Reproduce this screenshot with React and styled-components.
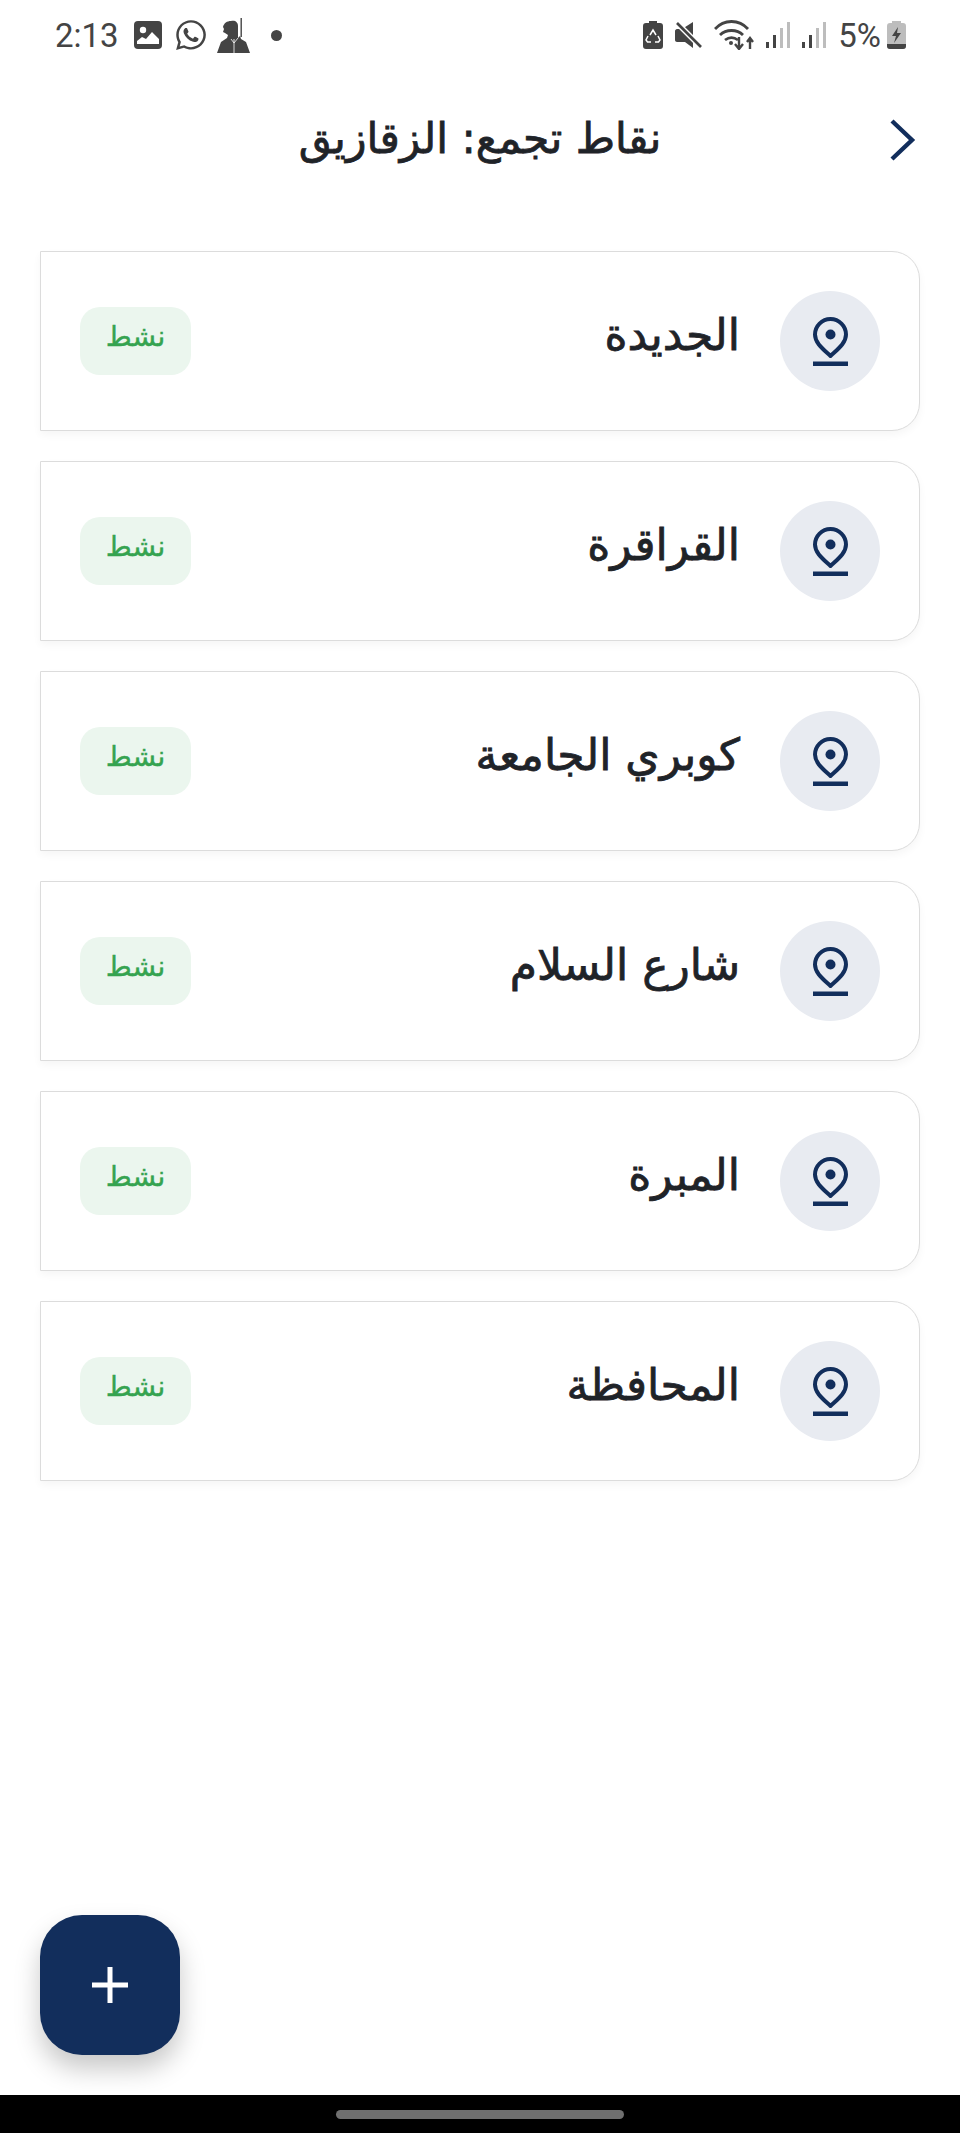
import styled, { createGlobalStyle } from 'styled-components'
import { FaWhatsapp } from 'react-icons/fa'

const GlobalStyle = createGlobalStyle`
  html, body {
    margin: 0;
    padding: 0;
    background: #fff;
  }
  * {
    box-sizing: border-box;
  }
`

const Screen = styled.div`
  position: relative;
  display: flex;
  flex-direction: column;
  width: 960px;
  height: 2133px;
  overflow: hidden;
  background: #fff;
  font-family: "DejaVu Sans", "Noto Sans", sans-serif;
`

const StatusBar = styled.div`
  display: flex;
  align-items: center;
  justify-content: space-between;
  height: 70px;
  padding: 0 54px 0 55px;
  color: #444;
`

const StatusGroup = styled.div`
  display: flex;
  align-items: center;
  gap: ${(p) => p.$gap}px;
`

const Clock = styled.span`
  font-family: Roboto, sans-serif;
  font-size: 33px;
  line-height: 1;
  margin-right: 3px;
`

const Percent = styled.span`
  font-family: Roboto, sans-serif;
  font-size: 33px;
  line-height: 1;
  margin: 0 -6px 0 0;
`

const Dot = styled.span`
  width: 11px;
  height: 11px;
  margin-left: 9px;
  border-radius: 50%;
  background: #444;
`

const Header = styled.header`
  display: flex;
  align-items: center;
  justify-content: center;
  position: relative;
  height: 140px;
  padding-bottom: 4px;
`

const Title = styled.h1`
  margin: 0;
  direction: rtl;
  font-size: 42.5px;
  font-weight: 400;
  color: #1f2328;
  -webkit-text-stroke: 0.8px #1f2328;
`

const BackButton = styled.span`
  position: absolute;
  top: 48px;
  right: 44px;
  display: flex;
  color: #122e5c;
`

const List = styled.div`
  display: flex;
  flex-direction: column;
  gap: 30px;
  padding: 41px 40px 0;
`

const Card = styled.div`
  display: flex;
  align-items: center;
  justify-content: space-between;
  direction: rtl;
  height: 180px;
  padding: 0 39px;
  background: #fff;
  border: 1.5px solid #dcdcdc;
  border-radius: 0 28px 28px 0;
  box-shadow: 0 4px 8px rgba(0, 0, 0, 0.04);
`

const CardMain = styled.div`
  display: flex;
  align-items: center;
  gap: 40px;
`

const PinCircle = styled.div`
  display: flex;
  align-items: center;
  justify-content: center;
  width: 100px;
  height: 100px;
  border-radius: 50%;
  background: #e8ebf1;
  color: #122e5c;
`

const PointName = styled.span`
  padding-bottom: 14px;
  font-size: 44px;
  color: #1f2328;
  -webkit-text-stroke: 0.8px #1f2328;
`

const Badge = styled.span`
  display: flex;
  align-items: center;
  justify-content: center;
  width: 111px;
  height: 68px;
  padding-bottom: 10px;
  border-radius: 20px;
  background: #ebf6ee;
  color: #35a350;
  font-size: 28px;
  -webkit-text-stroke: 0.4px #35a350;
`

const Fab = styled.button`
  position: absolute;
  left: 40px;
  bottom: 78px;
  display: flex;
  align-items: center;
  justify-content: center;
  width: 140px;
  height: 140px;
  padding: 0;
  border: 0;
  border-radius: 42px;
  background: #122e5c;
  color: #fff;
  box-shadow: 0 14px 26px rgba(0, 0, 0, 0.22);
`

const NavBar = styled.div`
  position: absolute;
  left: 0;
  right: 0;
  bottom: 0;
  display: flex;
  align-items: center;
  justify-content: center;
  height: 38px;
  background: #000;
`

const NavPill = styled.span`
  width: 288px;
  height: 9px;
  border-radius: 5px;
  background: #6f6f6f;
`

const Glyph = styled.svg`
  display: block;
  flex: none;
  margin-left: ${(p) => p.$shift || 0}px;
`

function GalleryIcon() {
  return (
    <Glyph width="28" height="28" viewBox="0 0 28 28">
      <rect width="28" height="28" rx="4" fill="#444" />
      <circle cx="9" cy="9" r="3.2" fill="#fff" />
      <path d="M3 23v-3l5-4 4 2 6-7 7 7v5z" fill="#fff" />
    </Glyph>
  )
}

function SoldierIcon() {
  return (
    <Glyph $shift={-3} width="33" height="35" viewBox="0 0 33 35">
      <path d="M23.5 0h1.4v19h-1.4z" fill="#444" />
      <path
        d="M14 3c4-1 7 1 7 5v12l2-2 1 3 5 3 4 11H0l4-11 6-4 1-3-3-2-2-1 1-3-1-2c1-4 4-6 8-6z"
        fill="#444"
      />
      <path d="M17 21l0 14M21 20l-4 5-3-4" stroke="#fff" strokeWidth="0.8" fill="none" />
    </Glyph>
  )
}

function RecycleBatteryIcon() {
  return (
    <Glyph width="20" height="28" viewBox="0 0 20 28">
      <path d="M6 0h8v2h3a3 3 0 0 1 3 3v20a3 3 0 0 1-3 3H3a3 3 0 0 1-3-3V5a3 3 0 0 1 3-3h3z" fill="#444" />
      <path
        d="M7 14l3-5 3 5M15 15l2 4-1.5 2H12M8 21H4.5L3 19l2-4"
        stroke="#fff"
        strokeWidth="1.5"
        fill="none"
      />
    </Glyph>
  )
}

function MuteIcon() {
  return (
    <Glyph width="27" height="26" viewBox="0 0 27 26">
      <path d="M0 9c0-1 1-2 2-2h5l11-7v26l-8-6H2c-1 0-2-1-2-2z" fill="#444" />
      <path d="M2 1l24 24" stroke="#fff" strokeWidth="5.5" />
      <path d="M2 1l24 24" stroke="#444" strokeWidth="2.6" />
    </Glyph>
  )
}

function WifiIcon() {
  return (
    <Glyph width="40" height="30" viewBox="0 0 40 30">
      <path
        d="M1 9c9-10 24-10 33 0M6 15c6-6 17-6 23 0M11 20c4-3 9-3 13 0"
        stroke="#444"
        strokeWidth="2.8"
        fill="none"
      />
      <circle cx="17" cy="23" r="2" fill="#444" />
      <path d="M25 17v11M21 24l4 5 4-5" stroke="#444" strokeWidth="2.4" fill="none" />
      <path d="M36 29V18M33 22l3-4 3 4" stroke="#444" strokeWidth="2.4" fill="none" />
    </Glyph>
  )
}

function SignalIcon() {
  return (
    <Glyph width="24" height="26" viewBox="0 0 24 26">
      <rect x="0" y="20" width="3" height="6" fill="#444" />
      <rect x="7" y="13" width="3" height="13" fill="#444" />
      <rect x="14" y="6" width="3" height="20" fill="#bdbdbd" />
      <rect x="21" y="0" width="3" height="26" fill="#bdbdbd" />
    </Glyph>
  )
}

function ChargingBatteryIcon() {
  return (
    <Glyph width="19" height="28" viewBox="0 0 19 28">
      <path d="M5 0h9v2h2a3 3 0 0 1 3 3v20a3 3 0 0 1-3 3H3a3 3 0 0 1-3-3V5a3 3 0 0 1 3-3h2z" fill="#bdbdbd" />
      <path d="M0 23h19v2a3 3 0 0 1-3 3H3a3 3 0 0 1-3-3z" fill="#444" />
      <path d="M11 6l-6 9h4l-2 7 7-10h-4z" fill="#444" />
    </Glyph>
  )
}

function PinIcon() {
  return (
    <svg width="35" height="49" viewBox="0 0 35 49">
      <path
        d="M17.5 39C10 32 2 26 2 17.5a15.5 15.5 0 0 1 31 0C33 26 25 32 17.5 39z"
        fill="none"
        stroke="currentColor"
        strokeWidth="4"
        strokeLinejoin="round"
      />
      <circle cx="17.5" cy="17.5" r="5" fill="currentColor" />
      <rect x="0" y="44.5" width="35" height="4.5" fill="currentColor" />
    </svg>
  )
}

const points = ['الجديدة', 'القراقرة', 'كوبري الجامعة', 'شارع السلام', 'المبرة', 'المحافظة']

export default function App() {
  return (
    <Screen>
      <GlobalStyle />
      <StatusBar>
        <StatusGroup $gap={12}>
          <Clock>2:13</Clock>
          <GalleryIcon />
          <FaWhatsapp size={34} />
          <SoldierIcon />
          <Dot />
        </StatusGroup>
        <StatusGroup $gap={12}>
          <RecycleBatteryIcon />
          <MuteIcon />
          <WifiIcon />
          <SignalIcon />
          <SignalIcon />
          <Percent>5%</Percent>
          <ChargingBatteryIcon />
        </StatusGroup>
      </StatusBar>
      <Header>
        <Title>نقاط تجمع: الزقازيق</Title>
        <BackButton>
          <svg width="28" height="44" viewBox="0 0 28 44">
            <path d="M4 3l20 19L4 41" fill="none" stroke="currentColor" strokeWidth="4.4" />
          </svg>
        </BackButton>
      </Header>
      <List>
        {points.map((name) => (
          <Card key={name}>
            <CardMain>
              <PinCircle>
                <PinIcon />
              </PinCircle>
              <PointName>{name}</PointName>
            </CardMain>
            <Badge>نشط</Badge>
          </Card>
        ))}
      </List>
      <Fab aria-label="إضافة">
        <svg width="36" height="36" viewBox="0 0 36 36">
          <path d="M18 0v36M0 18h36" stroke="currentColor" strokeWidth="5" />
        </svg>
      </Fab>
      <NavBar>
        <NavPill />
      </NavBar>
    </Screen>
  )
}
